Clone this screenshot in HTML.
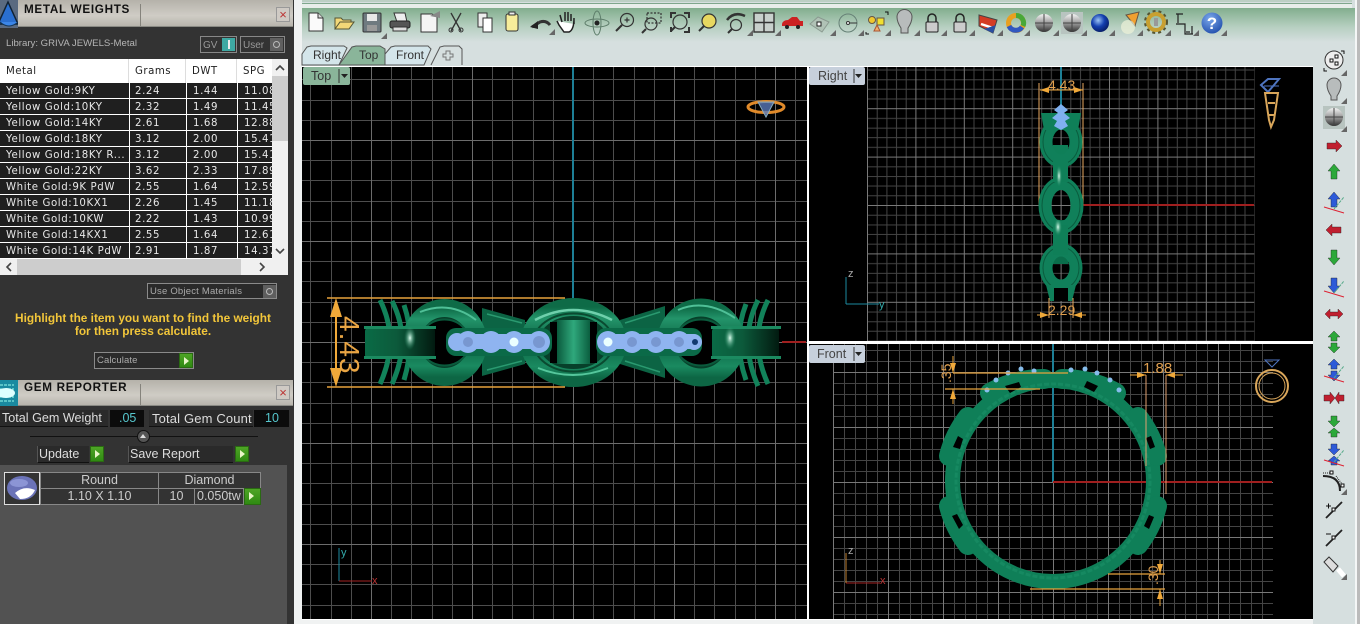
<!DOCTYPE html>
<html><head><meta charset="utf-8"><style>
html,body{margin:0;padding:0;width:1360px;height:624px;overflow:hidden;background:#f0f2f2}
*{box-sizing:border-box}
.a{position:absolute}
#L{left:0;top:0;width:294px;height:624px;background:#333;overflow:hidden;font-family:"DejaVu Sans","Liberation Sans",sans-serif;color:#ddd}
.tb{left:18px;width:275px;height:27px;background:linear-gradient(#b5b2aa,#cfccc5 60%,#b8b5ad);border-bottom:1px solid #8a8a84}
.tt{left:24px;font:bold 11.7px "Liberation Sans",sans-serif;color:#111;letter-spacing:.7px}
.x{left:276px;width:14px;height:15px;background:#cfcac4;border:1px solid #999;color:#b33;font:13px/13px "Liberation Sans",sans-serif;text-align:center}
.r{left:0;width:272px;height:15px;background:#1f1f1f;font-size:10.2px;line-height:15px;color:#e8e8e8;white-space:nowrap;overflow:hidden;letter-spacing:.6px}
.r span{position:absolute;top:1px}
.r i{position:absolute;top:0;width:1px;height:15px;background:#fff}
.s{font-family:"Liberation Sans",sans-serif}
.box{border:1px solid #8a8a8a;background:#2a2a2a}
.g{width:14px;height:15px;background:linear-gradient(#4ea526,#2f8a12);border:1px solid #2a6a12}
.g:after{content:"";position:absolute;left:4px;top:3px;border-left:5px solid #e8f5c8;border-top:4px solid transparent;border-bottom:4px solid transparent}
.c{border:1px solid #888;color:#e4e4e4;line-height:15px;text-align:center;background:#333;white-space:nowrap;overflow:hidden}
.h{font-size:10.2px;color:#222;letter-spacing:.5px;top:66px}
</style></head><body>
<div id="L" class="a">
<svg class="a" style="left:0;top:0" width="18" height="28"><rect width="18" height="28" fill="#5a6a80"/><path d="M-2 24L8 2L18 24Z" fill="#2a6fd0" stroke="#123" stroke-width="1.5"/><path d="M0 22Q9 30 18 22" fill="#3c86e8" stroke="#135"/></svg>
<div class="a tb" style="top:0"></div><div class="a" style="left:140px;top:4px;width:1px;height:22px;background:#85837c"></div>
<div class="a tt" style="top:3px">METAL WEIGHTS</div><div class="a x" style="top:7px">×</div>
<div class="a s" style="left:6px;top:38px;font-size:9.6px;color:#b5b5b5">Library: GRIVA JEWELS-Metal</div>
<div class="a" style="left:200px;top:36px;width:37px;height:17px;border:1px solid #888"></div><div class="a s" style="left:203px;top:40px;font-size:10px;color:#999">GV</div><div class="a" style="left:222px;top:38px;width:13px;height:13px;background:#3ea9a3"></div><div class="a" style="left:228px;top:40px;width:2px;height:9px;background:#eee"></div>
<div class="a" style="left:240px;top:36px;width:45px;height:17px;border:1px solid #888"></div><div class="a s" style="left:243px;top:40px;font-size:10px;color:#999">User</div><div class="a" style="left:270px;top:38px;width:13px;height:13px;background:#606060"></div><div class="a" style="left:273px;top:41px;width:7px;height:7px;border:1px solid #bbb;border-radius:50%"></div>
<!-- table -->
<div class="a" style="left:0;top:59px;width:288px;height:216px;background:#fff"></div>
<div class="a h" style="left:6px">Metal</div>
<div class="a h" style="left:135px">Grams</div>
<div class="a h" style="left:192px">DWT</div>
<div class="a h" style="left:243px">SPG</div>
<div class="a" style="left:128px;top:59px;width:1px;height:24px;background:#ddd"></div><div class="a" style="left:185px;top:59px;width:1px;height:24px;background:#ddd"></div><div class="a" style="left:236px;top:59px;width:1px;height:24px;background:#ddd"></div>
<div class="a r" style="top:83px"><span style="left:6px">Yellow Gold:9KY</span><i style="left:129px"></i><span style="left:135px">2.24</span><i style="left:186px"></i><span style="left:193px">1.44</span><i style="left:237px"></i><span style="left:244px">11.08</span></div>
<div class="a r" style="top:99px"><span style="left:6px">Yellow Gold:10KY</span><i style="left:129px"></i><span style="left:135px">2.32</span><i style="left:186px"></i><span style="left:193px">1.49</span><i style="left:237px"></i><span style="left:244px">11.45</span></div>
<div class="a r" style="top:115px"><span style="left:6px">Yellow Gold:14KY</span><i style="left:129px"></i><span style="left:135px">2.61</span><i style="left:186px"></i><span style="left:193px">1.68</span><i style="left:237px"></i><span style="left:244px">12.88</span></div>
<div class="a r" style="top:131px"><span style="left:6px">Yellow Gold:18KY</span><i style="left:129px"></i><span style="left:135px">3.12</span><i style="left:186px"></i><span style="left:193px">2.00</span><i style="left:237px"></i><span style="left:244px">15.41</span></div>
<div class="a r" style="top:147px"><span style="left:6px">Yellow Gold:18KY R...</span><i style="left:129px"></i><span style="left:135px">3.12</span><i style="left:186px"></i><span style="left:193px">2.00</span><i style="left:237px"></i><span style="left:244px">15.41</span></div>
<div class="a r" style="top:163px"><span style="left:6px">Yellow Gold:22KY</span><i style="left:129px"></i><span style="left:135px">3.62</span><i style="left:186px"></i><span style="left:193px">2.33</span><i style="left:237px"></i><span style="left:244px">17.89</span></div>
<div class="a r" style="top:179px"><span style="left:6px">White Gold:9K PdW</span><i style="left:129px"></i><span style="left:135px">2.55</span><i style="left:186px"></i><span style="left:193px">1.64</span><i style="left:237px"></i><span style="left:244px">12.59</span></div>
<div class="a r" style="top:195px"><span style="left:6px">White Gold:10KX1</span><i style="left:129px"></i><span style="left:135px">2.26</span><i style="left:186px"></i><span style="left:193px">1.45</span><i style="left:237px"></i><span style="left:244px">11.18</span></div>
<div class="a r" style="top:211px"><span style="left:6px">White Gold:10KW</span><i style="left:129px"></i><span style="left:135px">2.22</span><i style="left:186px"></i><span style="left:193px">1.43</span><i style="left:237px"></i><span style="left:244px">10.99</span></div>
<div class="a r" style="top:227px"><span style="left:6px">White Gold:14KX1</span><i style="left:129px"></i><span style="left:135px">2.55</span><i style="left:186px"></i><span style="left:193px">1.64</span><i style="left:237px"></i><span style="left:244px">12.61</span></div>
<div class="a r" style="top:243px"><span style="left:6px">White Gold:14K PdW</span><i style="left:129px"></i><span style="left:135px">2.91</span><i style="left:186px"></i><span style="left:193px">1.87</span><i style="left:237px"></i><span style="left:244px">14.37</span></div>
<div class="a" style="left:272px;top:59px;width:16px;height:200px;background:#f0f0f0"></div><div class="a" style="left:272px;top:76px;width:16px;height:65px;background:#cdcdcd"></div>
<div class="a" style="left:0;top:259px;width:288px;height:16px;background:#f0f0f0"></div><div class="a" style="left:17px;top:259px;width:224px;height:16px;background:#cdcdcd"></div>
<svg class="a" style="left:0;top:59px" width="288" height="216" fill="none" stroke="#444" stroke-width="1.6"><path d="M276 11l4-4 4 4M276 190l4 4 4-4M11 204l-4 4 4 4M260 204l4 4-4 4"/></svg>
<!-- mid -->
<div class="a box" style="left:147px;top:283px;width:130px;height:16px"></div><div class="a s" style="left:150px;top:286px;font-size:9.5px;color:#aaa;letter-spacing:.2px">Use Object Materials</div><div class="a" style="left:263px;top:285px;width:13px;height:13px;background:#5e5e5e"></div><div class="a" style="left:266px;top:288px;width:7px;height:7px;border:1px solid #bbb;border-radius:50%"></div>
<div class="a s" style="left:0;top:312px;width:286px;text-align:center;font-weight:bold;font-size:11.85px;line-height:13px;color:#f2c63a">Highlight the item you want to find the weight<br>for then press calculate.</div>
<div class="a box" style="left:94px;top:352px;width:100px;height:17px"></div><div class="a s" style="left:97px;top:355px;font-size:9.5px;color:#aaa;letter-spacing:.1px">Calculate</div><div class="a g" style="left:179px;top:353px"></div>
<!-- gem reporter -->
<svg class="a" style="left:0;top:380px" width="18" height="26"><rect width="18" height="26" fill="#1a8aa0"/><path d="M0 5h14M0 9h14M0 17h14M0 21h14" stroke="#9fe" stroke-dasharray="3 1"/><ellipse cx="6" cy="13" rx="9" ry="5" fill="#dff"/></svg>
<div class="a tb" style="top:380px;height:26px"></div><div class="a" style="left:140px;top:384px;width:1px;height:21px;background:#85837c"></div>
<div class="a tt" style="top:381px">GEM REPORTER</div><div class="a x" style="top:385px">×</div>
<div class="a" style="left:0;top:410px;width:108px;height:17px;background:#2a2a2a;border-bottom:1px solid #111"></div><div class="a s" style="left:2px;top:411px;font-size:12.6px;color:#ddd">Total Gem Weight</div>
<div class="a" style="left:110px;top:410px;width:34px;height:17px;background:#0c0c0c"></div><div class="a s" style="left:119px;top:411px;font-size:12.5px;color:#56c7ce">.05</div>
<div class="a" style="left:149px;top:410px;width:104px;height:17px;background:#2a2a2a;border-bottom:1px solid #111"></div><div class="a s" style="left:152px;top:411px;font-size:13px;color:#ddd;letter-spacing:.15px">Total Gem Count</div>
<div class="a" style="left:254px;top:410px;width:35px;height:17px;background:#0c0c0c"></div><div class="a s" style="left:265px;top:411px;font-size:12.5px;color:#56c7ce">10</div>
<div class="a" style="left:30px;top:436px;width:228px;height:1px;background:#111"></div><div class="a" style="left:137px;top:430px;width:13px;height:13px;border-radius:50%;background:#555;border:1px solid #111"></div><div class="a" style="left:140px;top:434px;border-bottom:4px solid #ddd;border-left:3.5px solid transparent;border-right:3.5px solid transparent"></div>
<div class="a" style="left:37px;top:446px;width:52px;height:17px;background:#2a2a2a;border-bottom:1px solid #111;border-left:1px solid #555"></div><div class="a s" style="left:39px;top:447px;font-size:12.5px;color:#ddd">Update</div><div class="a g" style="left:90px;top:446px;height:16px"></div>
<div class="a" style="left:128px;top:446px;width:105px;height:17px;background:#2a2a2a;border-bottom:1px solid #111;border-left:1px solid #555"></div><div class="a s" style="left:130px;top:447px;font-size:12.5px;color:#ddd">Save Report</div><div class="a g" style="left:235px;top:446px;height:16px"></div>
<div class="a" style="left:0;top:465px;width:287px;height:159px;background:#525252"></div>
<svg class="a" style="left:4px;top:472px" width="36" height="33"><rect x=".5" y=".5" width="35" height="32" fill="#333" stroke="#ddd"/><ellipse cx="18" cy="16" rx="15" ry="12" fill="#6b73b8"/><ellipse cx="15" cy="11" rx="9" ry="4" fill="#8c95d5"/><path d="M11 21Q20 13 31 18Q27 27 16 27Z" fill="#fff"/></svg>
<div class="a c s" style="left:40px;top:472px;width:119px;height:17px;font-size:12.5px;color:#ccc">Round</div><div class="a c s" style="left:158px;top:472px;width:103px;height:17px;font-size:12.5px;color:#ccc">Diamond</div>
<div class="a c s" style="left:40px;top:488px;width:119px;height:17px;font-size:12.5px;color:#ccc">1.10 X 1.10</div><div class="a c s" style="left:158px;top:488px;width:37px;height:17px;font-size:12.5px;color:#ccc">10</div><div class="a c s" style="left:194px;top:488px;width:50px;height:17px;font-size:12.5px;text-align:left;padding-left:2px;color:#ccc">0.050tw</div><div class="a g" style="left:244px;top:488px;width:17px;height:17px"></div>
</div>

<svg class="a" style="left:294px;top:0" width="1066" height="624" viewBox="294 0 1066 624" font-family="Liberation Sans, sans-serif">
<defs>
<linearGradient id="tbg" x1="0" y1="0" x2="0" y2="1"><stop offset="0" stop-color="#82ae8e"/><stop offset=".55" stop-color="#b6cfc0"/><stop offset="1" stop-color="#d6dfdf"/></linearGradient>
<pattern id="pT" patternUnits="userSpaceOnUse" x="573" y="342" width="101" height="101"><rect width="101" height="101" fill="#000"/><path d="M20.5 0V101M40.5 0V101M61.5 0V101M81.5 0V101M0 20.5H101M0 40.5H101M0 61.5H101M0 81.5H101" stroke="#4d4d4d" fill="none"/><path d="M.5 0V101M0 .5H101" stroke="#6c6c6c" fill="none"/></pattern>
<pattern id="pR" patternUnits="userSpaceOnUse" x="867" y="205" width="48.4" height="48.4"><rect width="48.4" height="48.4" fill="#000"/><path d="M10.2 0V49M19.9 0V49M29.5 0V49M39.2 0V49M0 10.2H49M0 19.9H49M0 29.5H49M0 39.2H49" stroke="#444" fill="none"/><path d="M.5 0V49M0 .5H49" stroke="#7a7a7a" fill="none"/></pattern>
<pattern id="pF" patternUnits="userSpaceOnUse" x="833" y="372" width="55" height="55"><rect width="55" height="55" fill="#000"/><path d="M11.5 0V55M22.5 0V55M33.5 0V55M44.5 0V55M0 11.5H55M0 22.5H55M0 33.5H55M0 44.5H55" stroke="#444" fill="none"/><path d="M.5 0V55M0 .5H55" stroke="#787878" fill="none"/></pattern>
<linearGradient id="lg" x1="0" y1="0" x2="0" y2="1"><stop offset="0" stop-color="#0e6b47"/><stop offset=".16" stop-color="#23946a"/><stop offset=".5" stop-color="#0b6242"/><stop offset=".84" stop-color="#1a8a60"/><stop offset="1" stop-color="#0d6644"/></linearGradient>
<linearGradient id="bd" x1="0" y1="0" x2="1" y2="0"><stop offset="0" stop-color="#0a6b46"/><stop offset=".45" stop-color="#0c5a3b"/><stop offset="1" stop-color="#021a10"/></linearGradient>
<linearGradient id="bc" x1="0" y1="0" x2="1" y2="0"><stop offset="0" stop-color="#0a5a3c"/><stop offset=".5" stop-color="#2fa87c"/><stop offset="1" stop-color="#0b5e3f"/></linearGradient>
<radialGradient id="sp" cx=".5" cy=".5" r=".5"><stop offset="0" stop-color="#dffff0"/><stop offset="1" stop-color="#1a8a60" stop-opacity="0"/></radialGradient>
<linearGradient id="ball" x1="0" y1="0" x2="0" y2="1"><stop offset="0" stop-color="#f4f4f4"/><stop offset=".6" stop-color="#888"/><stop offset="1" stop-color="#333"/></linearGradient>
<radialGradient id="blue" cx=".4" cy=".35" r=".7"><stop offset="0" stop-color="#9cc4f5"/><stop offset=".5" stop-color="#1440b0"/><stop offset="1" stop-color="#061a60"/></radialGradient>
<radialGradient id="help" cx=".4" cy=".3" r=".8"><stop offset="0" stop-color="#7ba8ec"/><stop offset="1" stop-color="#1c49a8"/></radialGradient>
<g id="tri"><path d="M6 0V6H0Z" fill="#666"/></g>
</defs>

<!-- chrome -->
<rect x="294" y="0" width="1066" height="624" fill="#f0f2f2"/>
<rect x="302" y="0" width="1058" height="66" fill="#d6dfdf"/>
<rect x="302" y="0" width="1050" height="2" fill="#bcd0c4"/><rect x="302" y="3" width="1050" height="1" fill="#7fa78c"/><rect x="302" y="4" width="1050" height="4" fill="#e8eeea"/>
<rect x="302" y="8" width="1058" height="34" fill="url(#tbg)"/>
<rect x="1313" y="42" width="42" height="582" fill="#d6dfdf"/>
<rect x="1355" y="0" width="2" height="624" fill="#f4f6f6"/><rect x="1357" y="0" width="3" height="624" fill="#bbb"/>

<!-- tabs -->
<path d="M431 65L440 47L444 46H459L462 49V65" fill="#d6dfdf" stroke="#555"/>
<path d="M385 65V54L391 47L395 46H428L431 49L424 65Z" fill="#d4e5ea" stroke="#555"/>
<path d="M302 65V54L307 47L311 46H344L347 48L339 65Z" fill="#d4e5ea" stroke="#555"/>
<path d="M339 65L352 47L356 46H380L385 49V65Z" fill="#8ab59a" stroke="#555"/>
<text x="313" y="59" font-size="12" fill="#333">Right</text><text x="359" y="59" font-size="12" fill="#333">Top</text><text x="396" y="59" font-size="12" fill="#333">Front</text>
<path d="M446 51h4v3h3v3h-3v3h-4v-3h-3v-3h3Z" fill="none" stroke="#777"/>

<!-- viewports -->
<rect x="302" y="66" width="1011" height="554" fill="#fff"/>
<rect x="302" y="67" width="505" height="552" fill="url(#pT)"/>
<rect x="809" y="67" width="504" height="274" fill="#000"/><rect x="867" y="67" width="387.5" height="274" fill="url(#pR)"/>
<rect x="809" y="344" width="504" height="275" fill="#000"/><rect x="833" y="344" width="440" height="275" fill="url(#pF)"/>

<!-- top view -->
<path d="M573 67V298" stroke="#1d7f96" stroke-width="2"/>
<path d="M782 342H806M700 342H720" stroke="#a01f1f" stroke-width="2"/>
<path d="M380 300Q400 340 380 384M392 301Q412 340 392 384M404 305Q416 340 404 380M768 300Q748 340 768 384M758 300Q738 340 758 386M746 304Q732 340 746 380" stroke="#12825a" stroke-width="5" fill="none"/>
<path d="M482 308L525 320V364L482 376ZM620 320L665 306V378L620 364Z" fill="#0c6444"/>
<path d="M487 314L522 323M487 370L522 361M625 323L660 312M625 361L660 372" stroke="#2a9a70" stroke-width="1.5"/>
<ellipse cx="444.5" cy="342.5" rx="33.5" ry="34.5" fill="#07402a" stroke="url(#lg)" stroke-width="18"/>
<ellipse cx="701" cy="342.5" rx="35" ry="35" fill="#07402a" stroke="url(#lg)" stroke-width="18"/>
<ellipse cx="444.5" cy="342.5" rx="25" ry="23" fill="#000" stroke="#0a5a3c" stroke-width="2"/>
<ellipse cx="701" cy="342.5" rx="26" ry="23" fill="#000" stroke="#0a5a3c" stroke-width="2"/>
<ellipse cx="573.5" cy="342.5" rx="44" ry="35.5" fill="#07402a" stroke="url(#lg)" stroke-width="18"/>
<rect x="550" y="322" width="47" height="41" fill="#000"/>
<rect x="557" y="320" width="33" height="44" fill="url(#bc)"/>
<ellipse cx="573.5" cy="342.5" rx="40" ry="29" fill="none" stroke="#0a4a30" stroke-width="2"/>
<path d="M535 320Q573 300 612 320" stroke="#6fd0ac" stroke-width="2.5" fill="none"/>
<path d="M538 368Q573 382 608 368" stroke="#55c79c" stroke-width="2" fill="none"/>
<path d="M420 312Q450 300 476 320M678 310Q705 298 735 318" stroke="#4fc097" stroke-width="2" fill="none"/>
<rect x="365" y="328" width="70" height="30" fill="url(#bd)" rx="3"/><rect x="364" y="326" width="72" height="3" fill="#1b8a60"/><rect x="364" y="356" width="72" height="3" fill="#1b8a60"/>
<ellipse cx="410" cy="338" rx="6" ry="12" fill="url(#sp)"/>
<rect x="712" y="328" width="67" height="30" fill="url(#bd)" rx="3"/><rect x="711" y="326" width="70" height="3" fill="#1b8a60"/><rect x="711" y="356" width="70" height="3" fill="#1b8a60"/>
<ellipse cx="730" cy="338" rx="6" ry="12" fill="url(#sp)"/>
<rect x="446" y="328" width="106" height="28" rx="10" fill="#0b6a48"/><rect x="596" y="328" width="106" height="28" rx="10" fill="#0b6a48"/>
<g fill="#8fb4f0"><rect x="449" y="334" width="100" height="15" rx="6"/><rect x="599" y="334" width="100" height="15" rx="6"/>
<circle cx="457" cy="342" r="9"/><circle cx="468" cy="342" r="11"/><circle cx="491" cy="342" r="11"/><circle cx="514" cy="342" r="11"/><circle cx="539" cy="342" r="11"/><circle cx="608" cy="342" r="11"/><circle cx="632" cy="342" r="11"/><circle cx="656" cy="342" r="11"/><circle cx="679" cy="342" r="11"/><circle cx="694" cy="342" r="8"/></g>
<g fill="#7897d0"><circle cx="539" cy="342" r="6"/><circle cx="468" cy="342" r="5"/><circle cx="632" cy="342" r="5"/><circle cx="656" cy="342" r="5"/><circle cx="679" cy="342" r="5"/></g>
<g fill="#eaffff"><circle cx="514" cy="342" r="4.5"/><circle cx="608" cy="342" r="4.5"/></g><circle cx="695" cy="342" r="3" fill="#123a70"/>
<path d="M327 298H565M327 387H565" stroke="#e8a33c" stroke-width="1.5"/>
<path d="M336 298L330 317H342ZM336 387L330 368H342Z M335 317H337V368H335Z" fill="#f0a93a"/>
<text transform="translate(340,316) rotate(90)" font-size="28" fill="#e9a544" letter-spacing="1">4.43</text>
<!-- mini icon top -->
<ellipse cx="766" cy="107" rx="18" ry="5.5" fill="none" stroke="#e08a2a" stroke-width="3"/><path d="M758 102H774L766 117Z" fill="#5a78b8" fill-opacity=".8" stroke="#8ab"/>
<path d="M339 581V548M339 581H372" stroke="#1c8aa0" fill="none"/><path d="M339 581H372" stroke="#a52222"/><text x="341" y="556" font-size="11" fill="#3aa">y</text><text x="372" y="584" font-size="11" fill="#b33">x</text>

<rect x="303" y="67" width="47" height="18" rx="2" fill="#8ab59a"/><text x="311" y="80" font-size="12.5" fill="#333">Top</text><path d="M339 69V83" stroke="#333"/><path d="M341 74h7l-3.5 4Z" fill="#222"/>

<!-- right view -->
<path d="M1061 67V110" stroke="#1d7f96" stroke-width="2"/><path d="M1080 205H1254" stroke="#a01f1f" stroke-width="2"/>
<path d="M1039 83V205M1083 83V205" stroke="#e8a860"/>
<path d="M1040 90H1083" stroke="#e8a33c"/><path d="M1040 90l9-3v6ZM1083 90l-9-3v6Z" fill="#f0a93a"/>
<text x="1048" y="90" font-size="14" fill="#e0a050">4.43</text>
<rect x="1053" y="145" width="15" height="36" fill="#0f7f58"/><rect x="1053" y="220" width="15" height="44" fill="#0a6e4b"/>
<g fill="none" stroke="#10805a" stroke-width="13">
<ellipse cx="1061" cy="142" rx="15" ry="19"/><ellipse cx="1061" cy="205.5" rx="16" ry="22"/><ellipse cx="1061" cy="268" rx="15" ry="18"/>
</g>
<g fill="none" stroke="#0a5c3e"><ellipse cx="1061" cy="142" rx="18" ry="22"/><ellipse cx="1061" cy="205.5" rx="19" ry="25"/><ellipse cx="1061" cy="268" rx="18" ry="21"/></g>
<rect x="1053" y="160" width="15" height="22" fill="#0f7f58"/><rect x="1053" y="225" width="15" height="30" fill="#0f7f58"/>
<path d="M1041 113H1081L1078 130H1044Z" fill="#0f7f58"/><path d="M1046 285L1050 301H1072L1076 285Z" fill="#10805a"/><rect x="1054" y="288" width="14" height="13" fill="#000"/>
<rect x="1056" y="165" width="6" height="22" fill="url(#sp)"/><rect x="1054" y="218" width="8" height="18" fill="url(#sp)"/>
<path d="M1061 104l7 6-4 3 6 5-5 3 3 5-7 4-7-4 3-5-5-3 6-5-4-3Z" fill="#7fb0ef"/>
<path d="M1049 298V318M1073 298V318" stroke="#e8a860"/><path d="M1037 315H1049M1073 315H1086" stroke="#e8a33c"/><path d="M1049 315l-9-3v6ZM1073 315l9-3v6Z" fill="#f0a93a"/>
<text x="1048" y="315" font-size="14" fill="#e0a050">2.29</text>
<path d="M846 304V277M846 304H879" stroke="#1c8aa0" fill="none"/><text x="848" y="277" font-size="11" fill="#aaa">z</text><text x="879" y="308" font-size="11" fill="#3aa">y</text>
<path d="M1261 85L1268 79H1279L1274 85L1268 92Z" fill="none" stroke="#4f75c0" stroke-width="2"/><path d="M1264 86H1279" stroke="#4f75c0"/>
<path d="M1265 93H1278L1274 120L1271 127L1269 120Z M1268 103H1275M1269 115H1274" fill="none" stroke="#d9a65a" stroke-width="2"/>
<rect x="809" y="67" width="56" height="18" rx="2" fill="#c7d0dc"/><text x="818" y="80" font-size="12.5" fill="#444">Right</text><path d="M854 69V83" stroke="#333"/><path d="M855 74h7l-3.5 4Z" fill="#222"/>

<!-- front view -->
<path d="M1053 344V482" stroke="#1d7f96" stroke-width="2"/><path d="M1053 482H1272" stroke="#a01f1f" stroke-width="2"/>
<circle cx="1053" cy="481" r="100.5" fill="none" stroke="#0f7f58" stroke-width="15"/>
<g fill="none" stroke="#0f7f58" stroke-width="20" stroke-linecap="round">
<path d="M949 456A108 108 0 0 1 968 417"/><path d="M949 506A108 108 0 0 0 968 545"/>
<path d="M1157 456A108 108 0 0 0 1138 417"/><path d="M1157 506A108 108 0 0 1 1138 545"/>
<path d="M990 393A108 108 0 0 1 1044 379"/><path d="M1062 379A108 108 0 0 1 1116 393"/>
</g>
<circle cx="1053" cy="481" r="97" fill="none" stroke="#1a9068" stroke-width="3" stroke-dasharray="5 2" opacity=".6"/>
<path d="M1005 386l14-4 2 5-11 6ZM1087 381l11 5-4 6-10-5ZM953 447l5-11 5 3-3 10ZM1146 438l5-2 4 11-5 2ZM952 516l5-2 6 11-4 4ZM1154 517l-5-2-5 11 5 3Z" fill="#000"/>
<g fill="#86bdec"><circle cx="987" cy="390" r="2.5"/><circle cx="996" cy="380" r="2.5"/><circle cx="1008" cy="373" r="2.5"/><circle cx="1021" cy="369" r="2.5"/><circle cx="1034" cy="371" r="2.5"/><circle cx="1071" cy="370" r="2.5"/><circle cx="1085" cy="369" r="2.5"/><circle cx="1097" cy="373" r="2.5"/><circle cx="1110" cy="380" r="2.5"/><circle cx="1119" cy="390" r="2.5"/></g>
<path d="M953 373H1068M945 389H1040" stroke="#e8a33c" stroke-width="1.2"/><path d="M953 356V373M953 389V404" stroke="#e8a33c"/><path d="M953 373l-3-10h6ZM953 389l-3 10h6Z" fill="#f0a93a"/>
<text transform="translate(951,383) rotate(-90)" font-size="14" fill="#e0a050">.35</text>
<path d="M1146 375V466M1166 375V494" stroke="#e0a070"/><path d="M1130 375H1146M1166 375H1183" stroke="#e8a33c"/><path d="M1146 375l-9-3v6ZM1166 375l9-3v6Z" fill="#f0a93a"/>
<text x="1143" y="373" font-size="15" fill="#e0a050">1.88</text>
<path d="M1108 574H1165M1030 589H1165" stroke="#e8a33c" stroke-width="1.2"/><path d="M1160 560V574M1160 589V606" stroke="#e8a33c"/><path d="M1160 574l-3-10h6ZM1160 589l-3 10h6Z" fill="#f0a93a"/>
<text transform="translate(1158,585) rotate(-90)" font-size="14" fill="#e0a050">.30</text>
<path d="M846 583V553M846 583H880" stroke="#a52222" fill="none"/><path d="M846 583V553" stroke="#c08030"/><text x="848" y="554" font-size="11" fill="#aaa">z</text><text x="880" y="584" font-size="11" fill="#b33">x</text>
<circle cx="1272" cy="386" r="16" fill="none" stroke="#d9a65a" stroke-width="2"/><circle cx="1272" cy="386" r="13" fill="none" stroke="#d9a65a"/><path d="M1265 360H1279L1272 367Z" fill="none" stroke="#4f75c0"/>
<rect x="809" y="345" width="56" height="18" rx="2" fill="#c7d0dc"/><text x="817" y="358" font-size="12.5" fill="#444">Front</text><path d="M854 347V361" stroke="#333"/><path d="M855 352h7l-3.5 4Z" fill="#222"/>

<!-- toolbar icons -->
<path d="M309 13H318L323 18V31H309Z" fill="#fafafa" stroke="#333"/><path d="M318 13V18H323" fill="#ddd" stroke="#333"/>
<path d="M335 29V18H341L343 20H351V22H340L335 29H349L354 22H340" fill="#f3d878" stroke="#553"/>
<rect x="363" y="13" width="18" height="19" rx="1" fill="#6f7a80" stroke="#333"/><rect x="367" y="14" width="10" height="7" fill="#e8e8e8"/><rect x="367" y="25" width="10" height="6" fill="#999"/>
<path d="M394 13H405L407 22H397Z" fill="#eee" stroke="#333"/><rect x="390" y="21" width="20" height="7" rx="2" fill="#555" stroke="#222"/><rect x="393" y="27" width="14" height="4" fill="#ddd" stroke="#333"/>
<path d="M421 14H432L437 17V32H421Z" fill="#f4f4f4" stroke="#333"/><path d="M430 16L440 11V18Z" fill="#888"/>
<path d="M451 13L461 31M461 13L451 31" stroke="#333" stroke-width="1.3"/><circle cx="451" cy="30" r="2" fill="none" stroke="#333"/><circle cx="461" cy="30" r="2" fill="none" stroke="#333"/>
<rect x="478" y="13" width="9" height="14" fill="#eee" stroke="#333"/><rect x="483" y="18" width="9" height="14" fill="#fff" stroke="#333"/>
<rect x="506" y="14" width="12" height="17" rx="2" fill="#f7ed9a" stroke="#333"/><rect x="509" y="12" width="6" height="3" fill="#eee" stroke="#333"/>
<path d="M532 27L540 22Q546 20 550 25" fill="none" stroke="#333" stroke-width="3"/><path d="M530 27l8-6v8Z" fill="#222"/>
<path d="M562 22L560 15M565 21V12M568 21V12M571 21V14M574 24V18Q574 30 569 32H564L559 25L557 21" fill="#fff" stroke="#222" stroke-width="1.5"/>
<ellipse cx="597" cy="23" rx="4" ry="12" fill="none" stroke="#5d7d6a"/><ellipse cx="597" cy="23" rx="12" ry="4" fill="none" stroke="#5d7d6a"/><circle cx="597" cy="23" r="2.5" fill="#222"/>
<g fill="none" stroke="#333" stroke-width="1.2"><circle cx="627" cy="20" r="6.5"/><path d="M622 25L616 31" stroke-width="2"/><path d="M624.5 20h5M627 17.5v5"/>
<circle cx="651" cy="24" r="6"/><path d="M646 29L642 33" stroke-width="2"/><rect x="647" y="13" width="14" height="10" stroke-dasharray="2 1.5"/>
<circle cx="680" cy="22" r="7"/><path d="M675 27L671 31" stroke-width="2"/><path d="M671 18v-5h5M689 18v-5h-5M671 27v5M689 27v5h-5" stroke-width="2"/>
<circle cx="709" cy="21" r="7" fill="#e8d860"/><path d="M704 26L699 31" stroke-width="2"/>
<circle cx="736" cy="25" r="5.5"/><path d="M732 29L728 33" stroke-width="2"/><path d="M727 20Q734 11 745 16" stroke-width="2.5"/></g>
<g fill="none" stroke="#333" stroke-width="1.4"><rect x="754" y="13" width="20" height="19" fill="#c8d0cc"/><path d="M764 13V32M754 22.5H774"/></g>
<path d="M782 24Q783 20 788 20L792 17H797L800 21H803V26H782Z" fill="#c22"/><circle cx="787" cy="27" r="2" fill="#222"/><circle cx="798" cy="27" r="2" fill="#222"/>
<path d="M810 24L818 17L829 22L822 32Z" fill="#b0c2b6" stroke="#8a9a90"/><rect x="817" y="22" width="4" height="4" fill="#fff" stroke="#222"/>
<circle cx="848" cy="23" r="9" fill="none" stroke="#668076"/><path d="M848 23H857" stroke="#333"/><circle cx="848" cy="23" r="1.5" fill="#fff" stroke="#333"/>
<circle cx="872" cy="20" r="3.5" fill="#f0c830" stroke="#654"/><rect x="877" y="18" width="7" height="7" fill="#f0e030" stroke="#654"/><path d="M874 31L877 25L880 31Z" fill="#f0b070" stroke="#a53"/><path d="M866 32V34H869M885 12H888V15" stroke="#111" fill="none"/>
<path d="M897 17A7.5 7.5 0 0 1 912 17Q912 22 908 28V33H901V28Q897 22 897 17Z" fill="#b8bcbc" stroke="#555"/>
<g fill="#ccc" stroke="#222"><rect x="926" y="22" width="12" height="10" rx="1"/><rect x="954" y="22" width="12" height="10" rx="1"/></g><path d="M928 22V18A4 4 0 0 1 936 18V22M956 22V18A4 4 0 0 1 964 18V22" fill="none" stroke="#222" stroke-width="1.5"/>
<path d="M979 15L997 20L993 33L979 26Z" fill="#d43c24" stroke="#444"/><path d="M981 24L993 28" stroke="#fff" stroke-width="2.5"/><path d="M984 29L993 33L996 25" fill="#2a4ea0"/>
<circle cx="1016" cy="23" r="7.5" fill="none" stroke="#e8a020" stroke-width="5"/><path d="M1016 15.5A7.5 7.5 0 0 1 1023 26" fill="none" stroke="#48a838" stroke-width="5"/><path d="M1022 27A7.5 7.5 0 0 1 1009 26" fill="none" stroke="#3058c0" stroke-width="5"/>
<circle cx="1044" cy="23" r="9" fill="url(#ball)"/><path d="M1044 14V32M1035 23H1053" stroke="#444"/>
<rect x="1061" y="12" width="22" height="22" fill="#b8c4c0"/><circle cx="1072" cy="23" r="9" fill="url(#ball)"/><path d="M1072 14V32M1063 23H1081" stroke="#444"/>
<circle cx="1100" cy="23" r="9" fill="url(#blue)"/>
<path d="M1126 15L1139 12L1135 26Z" fill="#f0a030" stroke="#654"/><circle cx="1128" cy="27" r="7" fill="#eef2d8" opacity=".7"/>
<circle cx="1156" cy="22" r="8" fill="none" stroke="#c8a030" stroke-width="4"/><circle cx="1156" cy="22" r="11" fill="none" stroke="#553" stroke-dasharray="3 3" stroke-width="2"/><rect x="1154" y="18" width="4" height="8" fill="#999"/>
<path d="M1176 14H1183M1178 14V23M1176 24H1185V34H1193M1192 26V34M1186 32H1190" fill="none" stroke="#222" stroke-width="1.2"/>
<circle cx="1212" cy="23" r="10.5" fill="url(#help)"/><text x="1212" y="29" font-size="17" font-weight="bold" fill="#fff" text-anchor="middle">?</text>
<g id="tris"><use href="#tri" x="381" y="33"/><use href="#tri" x="549" y="29"/><use href="#tri" x="747" y="30"/><use href="#tri" x="775" y="30"/><use href="#tri" x="858" y="30"/><use href="#tri" x="885" y="30"/><use href="#tri" x="914" y="30"/><use href="#tri" x="941" y="30"/><use href="#tri" x="969" y="30"/><use href="#tri" x="997" y="30"/><use href="#tri" x="1024" y="30"/><use href="#tri" x="1053" y="30"/><use href="#tri" x="1081" y="30"/><use href="#tri" x="1109" y="30"/><use href="#tri" x="1137" y="30"/><use href="#tri" x="1165" y="30"/><use href="#tri" x="1193" y="30"/><use href="#tri" x="1221" y="30"/><use href="#tri" x="830" y="30"/></g>

<!-- right toolbar -->
<circle cx="1334" cy="60" r="9" fill="#eee" stroke="#333"/><g fill="#fff" stroke="#111"><rect x="1330" y="59" width="3" height="3"/><rect x="1335" y="55" width="3" height="3"/><rect x="1335" y="62" width="3" height="3"/></g><path d="M1324 68V71H1327M1341 51H1344V54" fill="none" stroke="#111"/><use href="#tri" x="1341" y="70"/>
<path d="M1327 85A7 7 0 0 1 1341 85Q1341 90 1337 96V100H1331V96Q1327 90 1327 85Z" fill="#b8bcbc" stroke="#555"/><use href="#tri" x="1341" y="98"/>
<rect x="1323" y="106" width="22" height="23" fill="#b8c4c0"/><circle cx="1334" cy="117" r="9" fill="url(#ball)"/><path d="M1334 108V126M1325 117H1343" stroke="#444"/><use href="#tri" x="1341" y="126"/>
<g stroke="#222" stroke-width=".4">
<path d="M1327 143H1336V140L1342 146L1336 152V149H1327Z" fill="#c01f2f"/>
<path d="M1331 179V171H1328L1334 164L1340 171H1337V179Z" fill="#2ca83a"/>
<path d="M1331 207V199H1328L1334 192L1340 199H1337V207Z" fill="#2d5ad8"/>
<path d="M1341 227H1332V224L1326 230L1332 236V233H1341Z" fill="#c01f2f"/>
<path d="M1331 250V258H1328L1334 265L1340 258H1337V250Z" fill="#2ca83a"/>
<path d="M1331 278V286H1328L1334 293L1340 286H1337V278Z" fill="#2d5ad8"/>
<path d="M1325 314L1330 309V312H1338V309L1343 314L1338 319V316H1330V319Z" fill="#c01f2f"/>
<path d="M1331 341V337H1328L1334 331L1340 337H1337V341ZM1331 343V347H1328L1334 353L1340 347H1337V343Z" fill="#2ca83a"/>
<path d="M1331 369V365H1328L1334 359L1340 365H1337V369ZM1331 371V375H1328L1334 381L1340 375H1337V371Z" fill="#2d5ad8"/>
<path d="M1324 395H1330V392L1335 398L1330 404V401H1324ZM1344 395H1339V392L1335 398L1339 404V401H1344Z" fill="#c01f2f"/>
<path d="M1331 416V421H1328L1334 427L1340 421H1337V416ZM1331 437V433H1328L1334 428L1340 433H1337V437Z" fill="#2ca83a"/>
<path d="M1331 444V449H1328L1334 455L1340 449H1337V444ZM1331 465V461H1328L1334 456L1340 461H1337V465Z" fill="#2d5ad8"/>
</g>
<path d="M1324 207L1344 213M1324 291L1344 297M1324 376L1344 382M1324 460L1344 466" stroke="#d23" /><path d="M1334 209L1344 197M1334 293L1344 281M1334 378L1344 366M1334 462L1344 450" stroke="#5a8" stroke-dasharray="3 1"/>
<path d="M1323 476Q1340 476 1340 491" fill="none" stroke="#222" stroke-width="2"/><path d="M1323 473H1331M1336 476L1342 484" stroke="#222" stroke-dasharray="1 1" fill="none"/><g fill="#fff" stroke="#111"><rect x="1330" y="471" width="3" height="3"/><rect x="1341" y="484" width="3" height="3"/></g><use href="#tri" x="1341" y="489"/>
<path d="M1326 518L1342 502M1326 546L1342 530" stroke="#222" stroke-width="1.8"/><rect x="1332" y="508" width="3" height="3" fill="#fff" stroke="#111"/><rect x="1332" y="536" width="3" height="3" fill="#fff" stroke="#111"/><path d="M1326 506h5M1328.5 503.5v5M1326 534h5" stroke="#111"/>
<path d="M1324 562L1329 557L1338 566L1333 572Z" fill="#ddd" stroke="#333"/><path d="M1338 569L1344 576" stroke="#fff" stroke-width="5"/><use href="#tri" x="1341" y="574"/>
</svg>
</body></html>
